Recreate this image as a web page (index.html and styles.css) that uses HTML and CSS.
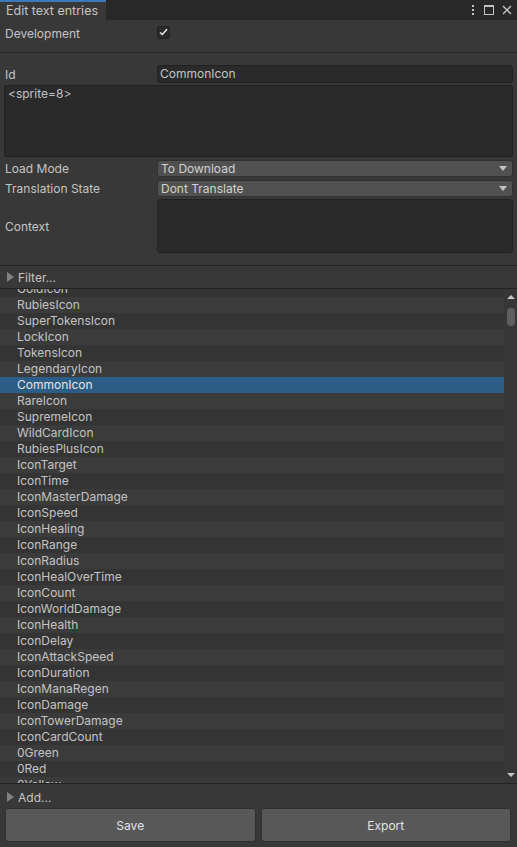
FILE: index.html
```html
<!DOCTYPE html>
<html lang="en">
<head>
  <title>Edit text entries</title>
  <link rel="stylesheet" href="styles.css">
</head>
<body>
  <div class="window">
    <div class="tabbar">
      <div class="tab">Edit text entries</div>
      <div class="tab-icons">
        <svg width="4" height="10" viewBox="0 0 4 10"><rect x="1" y="0" width="2" height="2" fill="#c4c4c4"/><rect x="1" y="4" width="2" height="2" fill="#c4c4c4"/><rect x="1" y="8" width="2" height="2" fill="#c4c4c4"/></svg>
        <svg width="10" height="10" viewBox="0 0 10 10"><rect x="0.5" y="0.5" width="9" height="9" fill="none" stroke="#c4c4c4"/><rect x="0" y="0" width="10" height="2" fill="#c4c4c4"/></svg>
        <svg width="10" height="10" viewBox="0 0 10 10"><path d="M1 1 L9 9 M9 1 L1 9" stroke="#c4c4c4" stroke-width="1.4"/></svg>
      </div>
    </div>

    <div class="inspector">
      <div class="row dev">
        <span class="label">Development</span>
        <span class="checkbox">
          <svg width="9" height="8" viewBox="0 0 9 8"><path d="M1 4.5 L3.3 6.5 L8 1.2" fill="none" stroke="#e6e6e6" stroke-width="1.6"/></svg>
        </span>
      </div>
      <div class="sep"></div>

      <div class="row field-row">
        <span class="label">Id</span>
        <div class="field">CommonIcon</div>
      </div>
      <div class="textarea">&lt;sprite=8&gt;</div>

      <div class="row drop-row">
        <span class="label">Load Mode</span>
        <div class="dropdown">To Download<span class="arrow"></span></div>
      </div>
      <div class="row drop-row">
        <span class="label">Translation State</span>
        <div class="dropdown">Dont Translate<span class="arrow"></span></div>
      </div>
      <div class="row context-row">
        <span class="label">Context</span>
        <div class="field context"></div>
      </div>
    </div>

    <div class="foldout filter"><span class="fold-arrow"></span>Filter...</div>

    <div class="list">
      <div class="list-view">
        <div class="list-items" id="items"></div>
      </div>
      <div class="scrollbar">
        <span class="sb-up"></span>
        <span class="sb-thumb"></span>
        <span class="sb-down"></span>
      </div>
    </div>

    <div class="foldout add"><span class="fold-arrow"></span>Add...</div>

    <div class="buttons">
      <button>Save</button>
      <button>Export</button>
    </div>
  </div>

  <script>
    const names = [
      "GoldIcon", "RubiesIcon", "SuperTokensIcon", "LockIcon", "TokensIcon",
      "LegendaryIcon", "CommonIcon", "RareIcon", "SupremeIcon", "WildCardIcon",
      "RubiesPlusIcon", "IconTarget", "IconTime", "IconMasterDamage", "IconSpeed",
      "IconHealing", "IconRange", "IconRadius", "IconHealOverTime", "IconCount",
      "IconWorldDamage", "IconHealth", "IconDelay", "IconAttackSpeed", "IconDuration",
      "IconManaRegen", "IconDamage", "IconTowerDamage", "IconCardCount", "0Green",
      "0Red", "0Yellow"
    ];
    const items = document.getElementById("items");
    names.forEach((name, i) => {
      const row = document.createElement("div");
      row.className = "item" + (i % 2 ? " odd" : "") + (name === "CommonIcon" ? " selected" : "");
      row.textContent = name;
      items.appendChild(row);
    });
  </script>
</body>
</html>
```

FILE: styles.css
```css
body {
  margin: 0;
  background-color: #383838;
  font-family: Inter, "Noto Sans", sans-serif;
  font-size: 12px;
  color: #c4c4c4;
}

.window {
  width: 517px;
  height: 847px;
  display: flex;
  flex-direction: column;
  overflow: hidden;
}

/* tab strip */
.tabbar {
  height: 20px;
  display: flex;
  background-color: #282828;
  flex-shrink: 0;
}

.tab {
  width: 100px;
  padding-left: 6px;
  border-top: 2px solid #3a79bb;
  background-color: #383838;
  line-height: 18px;
  font-size: 12.5px;
}

.tab-icons {
  margin-left: auto;
  display: flex;
  align-items: center;
  gap: 8px;
  padding-right: 5px;
}

.tab-icons svg:first-child {
  margin-right: 1px;
}

/* inspector fields */
.inspector {
  display: flex;
  flex-direction: column;
  padding: 0 4px 12px 5px;
  flex-shrink: 0;
}

.row {
  display: flex;
  align-items: center;
}

.label {
  width: 152px;
  flex-shrink: 0;
}

.dev {
  height: 26px;
  margin-bottom: 6px;
}

.checkbox {
  width: 11px;
  height: 11px;
  margin-top: -2px;
  border: 1px solid #212121;
  border-radius: 2px;
  background-color: #2a2a2a;
  display: flex;
  align-items: center;
  justify-content: center;
}

.sep {
  height: 1px;
  margin: 0 -4px 12px -5px;
  background-color: #2a2a2a;
}

.field {
  flex: 1;
  height: 16px;
  line-height: 16px;
  padding-left: 2px;
  border: 1px solid #212121;
  border-radius: 3px;
  background-color: #2a2a2a;
}

.field-row {
  height: 18px;
}

.textarea {
  margin: 2px 0 0 -1px;
  height: 68px;
  padding: 1px 3px;
  border: 1px solid #212121;
  border-radius: 2px;
  background-color: #2a2a2a;
  line-height: 14px;
}

.drop-row {
  height: 17px;
  margin-top: 3px;
}

.dropdown {
  flex: 1;
  height: 15px;
  line-height: 15px;
  padding-left: 3px;
  border: 1px solid #303030;
  border-radius: 3px;
  background-color: #515151;
  color: #d2d2d2;
  display: flex;
  align-items: center;
}

.arrow {
  margin-left: auto;
  margin-right: 5px;
  width: 0;
  height: 0;
  border-left: 4px solid transparent;
  border-right: 4px solid transparent;
  border-top: 5px solid #c4c4c4;
}

.context-row {
  margin-top: 2px;
  height: 54px;
}

.field.context {
  height: 52px;
}

/* foldouts */
.foldout {
  display: flex;
  align-items: center;
  padding-left: 7px;
  flex-shrink: 0;
}

.fold-arrow {
  width: 0;
  height: 0;
  margin-right: 4px;
  border-top: 5px solid transparent;
  border-bottom: 5px solid transparent;
  border-left: 7px solid #808080;
}

.filter {
  height: 22px;
  border-top: 1px solid #232323;
  border-bottom: 1px solid #232323;
}

.add {
  height: 22px;
  padding-top: 2px;
}

/* list */
.list {
  height: 494px;
  display: flex;
  border-bottom: 1px solid #232323;
  flex-shrink: 0;
}

.list-view {
  flex: 1;
  overflow: hidden;
}

.list-items {
  margin-top: -8px;
}

.item {
  height: 16px;
  line-height: 16px;
  padding-left: 17px;
  background-color: #343434;
}

.item.odd {
  background-color: #3b3b3b;
}

.item.selected {
  background-color: #2c5d87;
  color: #e6e6e6;
}

.scrollbar {
  width: 13px;
  background-color: #363636;
  display: flex;
  flex-direction: column;
  align-items: center;
}

.sb-up,
.sb-down {
  width: 0;
  height: 0;
  border-left: 4px solid transparent;
  border-right: 4px solid transparent;
}

.sb-up {
  margin-top: 6px;
  border-bottom: 4px solid #c4c4c4;
}

.sb-thumb {
  width: 8px;
  height: 18px;
  margin-top: 9px;
  border-radius: 4px;
  background-color: #5f5f5f;
}

.sb-down {
  margin-top: auto;
  margin-bottom: 6px;
  border-top: 4px solid #c4c4c4;
}

/* buttons */
.buttons {
  display: flex;
  gap: 5px;
  padding: 0 6px 0 5px;
  flex-shrink: 0;
}

button {
  flex: 1;
  height: 34px;
  border: 1px solid #303030;
  border-radius: 3px;
  background-color: #585858;
  color: #e4e4e4;
  font-family: Inter, "Noto Sans", sans-serif;
  font-size: 12px;
}
```
